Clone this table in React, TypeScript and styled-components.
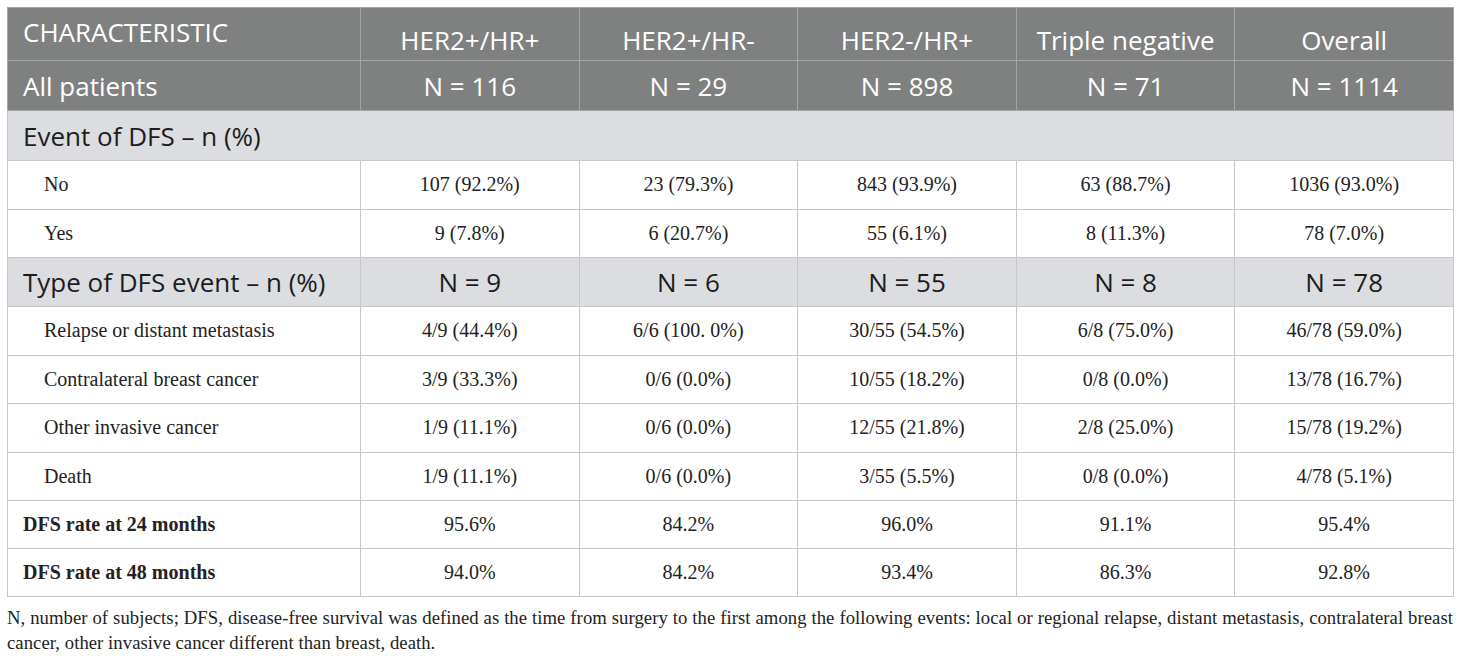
import { createGlobalStyle } from 'styled-components';
import styled from 'styled-components';

const GlobalStyle = createGlobalStyle`
  body {
    margin: 0;
    background: #ffffff;
  }
`;

const Page = styled.div`
  padding: 7px 7px 0 7px;
  width: 1446px;
`;

const Table = styled.table`
  width: 1446px;
  border-collapse: collapse;
  table-layout: fixed;
`;

const HeadCell = styled.th<{ $top?: boolean; $left?: boolean }>`
  background: #7f8080;
  color: #ffffff;
  font-family: "Open Sans", "DejaVu Sans", sans-serif;
  font-size: 26px;
  font-weight: 400;
  text-align: ${(p) => (p.$left ? 'left' : 'center')};
  padding: 0 15px;
  border: 1px solid #a4a6a6;
  vertical-align: ${(p) => (p.$top ? 'top' : 'bottom')};
  white-space: nowrap;
`;

const HeadRow = styled.tr<{ $h: number }>`
  height: ${(p) => p.$h}px;
`;

const GroupCell = styled.td<{ $left?: boolean }>`
  background: #dcdde0;
  color: #1c1c1c;
  font-family: "Open Sans", "DejaVu Sans", sans-serif;
  font-size: 26px;
  text-align: ${(p) => (p.$left ? 'left' : 'center')};
  padding: 0 15px;
  border: 1px solid #c6c7c9;
  white-space: nowrap;
`;

const Row = styled.tr<{ $h: number }>`
  height: ${(p) => p.$h}px;
`;

const Cell = styled.td<{ $label?: boolean; $indent?: boolean; $bold?: boolean }>`
  font-family: "Liberation Serif", "Times New Roman", serif;
  font-size: 20px;
  color: #222222;
  font-weight: ${(p) => (p.$bold ? 700 : 400)};
  text-align: ${(p) => (p.$label ? 'left' : 'center')};
  padding: 0 0 0 ${(p) => (p.$indent ? 36 : p.$label ? 15 : 0)}px;
  border: 1px solid #c6c7c9;
  white-space: nowrap;
`;

const Caption = styled.p`
  margin: 8px 0 0 0;
  font-family: "Liberation Serif", "Times New Roman", serif;
  font-size: 18.7px;
  letter-spacing: 0.05px;
  line-height: 25px;
  text-align: justify;
  color: #222222;
`;

const columns = ['HER2+/HR+', 'HER2+/HR-', 'HER2-/HR+', 'Triple negative', 'Overall'];
const totals = ['N = 116', 'N = 29', 'N = 898', 'N = 71', 'N = 1114'];

const eventRows = [
  { label: 'No', values: ['107 (92.2%)', '23 (79.3%)', '843 (93.9%)', '63 (88.7%)', '1036 (93.0%)'] },
  { label: 'Yes', values: ['9 (7.8%)', '6 (20.7%)', '55 (6.1%)', '8 (11.3%)', '78 (7.0%)'] },
];

const typeTotals = ['N = 9', 'N = 6', 'N = 55', 'N = 8', 'N = 78'];

const typeRows = [
  { label: 'Relapse or distant metastasis', values: ['4/9 (44.4%)', '6/6 (100. 0%)', '30/55 (54.5%)', '6/8 (75.0%)', '46/78 (59.0%)'] },
  { label: 'Contralateral breast cancer', values: ['3/9 (33.3%)', '0/6 (0.0%)', '10/55 (18.2%)', '0/8 (0.0%)', '13/78 (16.7%)'] },
  { label: 'Other invasive cancer', values: ['1/9 (11.1%)', '0/6 (0.0%)', '12/55 (21.8%)', '2/8 (25.0%)', '15/78 (19.2%)'] },
  { label: 'Death', values: ['1/9 (11.1%)', '0/6 (0.0%)', '3/55 (5.5%)', '0/8 (0.0%)', '4/78 (5.1%)'] },
];

const rateRows = [
  { label: 'DFS rate at 24 months', values: ['95.6%', '84.2%', '96.0%', '91.1%', '95.4%'] },
  { label: 'DFS rate at 48 months', values: ['94.0%', '84.2%', '93.4%', '86.3%', '92.8%'] },
];

const App = () => {
  return (
    <>
      <GlobalStyle />
      <Page>
        <Table>
          <colgroup>
            <col style={{ width: 353 }} />
            {columns.map((c) => (
              <col key={c} style={{ width: 218.6 }} />
            ))}
          </colgroup>
          <thead>
            <HeadRow $h={53}>
              <HeadCell $left $top style={{ paddingTop: 6 }}>CHARACTERISTIC</HeadCell>
              {columns.map((c) => (
                <HeadCell key={c} style={{ paddingBottom: 2 }}>{c}</HeadCell>
              ))}
            </HeadRow>
            <HeadRow $h={50}>
              <HeadCell $left style={{ verticalAlign: 'middle' }}>All patients</HeadCell>
              {totals.map((t) => (
                <HeadCell key={t} style={{ verticalAlign: 'middle' }}>{t}</HeadCell>
              ))}
            </HeadRow>
          </thead>
          <tbody>
            <Row $h={50}>
              <GroupCell $left colSpan={6}>Event of DFS – n (%)</GroupCell>
            </Row>
            {eventRows.map((r) => (
              <Row $h={48.5} key={r.label}>
                <Cell $label $indent>{r.label}</Cell>
                {r.values.map((v, i) => (
                  <Cell key={i}>{v}</Cell>
                ))}
              </Row>
            ))}
            <Row $h={49}>
              <GroupCell $left>Type of DFS event – n (%)</GroupCell>
              {typeTotals.map((t, i) => (
                <GroupCell key={i}>{t}</GroupCell>
              ))}
            </Row>
            {typeRows.map((r) => (
              <Row $h={48.5} key={r.label}>
                <Cell $label $indent>{r.label}</Cell>
                {r.values.map((v, i) => (
                  <Cell key={i}>{v}</Cell>
                ))}
              </Row>
            ))}
            {rateRows.map((r) => (
              <Row $h={48} key={r.label}>
                <Cell $label $bold>{r.label}</Cell>
                {r.values.map((v, i) => (
                  <Cell key={i}>{v}</Cell>
                ))}
              </Row>
            ))}
          </tbody>
        </Table>
        <Caption>
          N, number of subjects; DFS, disease-free survival was defined as the time from surgery to the first among the following events: local or regional relapse, distant metastasis, contralateral breast cancer, other invasive cancer different than breast, death.
        </Caption>
      </Page>
    </>
  );
};

export default App;
